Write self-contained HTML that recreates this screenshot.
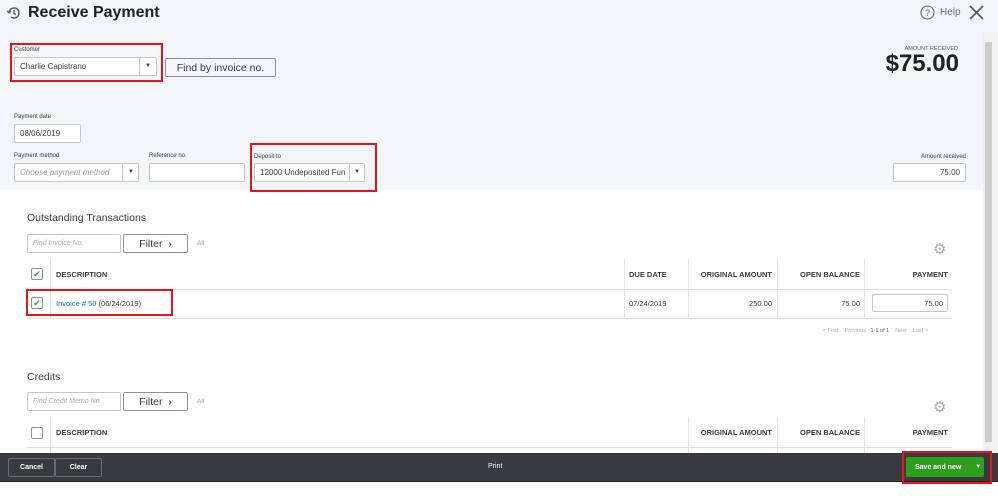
<!DOCTYPE html>
<html><head><meta charset="utf-8"><style>
*{box-sizing:border-box;margin:0;padding:0}
body{width:998px;height:502px;overflow:hidden;background:#fff;font-family:"Liberation Sans",sans-serif;color:#393a3d;position:relative}
.a{position:absolute}
.hdr{left:0;top:0;width:998px;height:190px;background:#f4f5f8}
.lbl{font-size:6px;color:#393a3d}
.inp{background:#fff;border:1px solid #c4c6c9;border-radius:2px;font-size:8px;padding-left:5px;display:flex;align-items:center}
.red{border:2px solid #e8141c}
.th{font-size:7.5px;font-weight:bold;color:#393a3d}
.vl{width:1px;background:#e3e5e8}
.hl{height:1px;background:#dcdfe3}
.btn{background:#fff;border:1px solid #8d9096;border-radius:2px;font-size:10.5px;display:flex;align-items:center;justify-content:center}
.fb{border:1px solid #6b6c72;border-radius:2px;color:#fff;font-size:7px;font-weight:bold;display:flex;align-items:center;justify-content:center}
.r{text-align:right}
.arr{font-size:6px;line-height:19px}
</style></head><body>
<div class="a hdr"></div>
<svg class="a" style="left:6px;top:5px" width="16" height="16" viewBox="0 0 16 16"><path d="M3 8a5 5 0 1 1 2 4" fill="none" stroke="#555" stroke-width="1.4"/><path d="M8 5v3.5l2 1" fill="none" stroke="#555" stroke-width="1.3"/><path d="M1 6l2 2 2-2" fill="none" stroke="#555" stroke-width="1.2"/></svg>
<div class="a" style="left:28px;top:4px;font-size:16px;font-weight:bold;color:#222">Receive Payment</div>
<svg class="a" style="left:920px;top:5px" width="15" height="15" viewBox="0 0 15 15"><circle cx="7.5" cy="7.5" r="6.5" fill="none" stroke="#666" stroke-width="1.1"/><text x="7.5" y="11" font-size="9" text-anchor="middle" fill="#666" font-family="Liberation Sans">?</text></svg>
<div class="a" style="left:940px;top:7px;font-size:10px;color:#6b6c72">Help</div>
<svg class="a" style="left:969px;top:5px" width="15" height="15" viewBox="0 0 15 15"><path d="M1 1L14 14M14 1L1 14" stroke="#555" stroke-width="1.6"/></svg>
<div class="a" style="left:983px;top:32px;width:15px;height:421px;background:#f0f0f0"></div>
<div class="a" style="left:985px;top:42px;width:7px;height:400px;background:#cdcdcd"></div>

<div class="a red" style="left:10px;top:43px;width:153px;height:39px"></div>
<div class="a lbl" style="left:14px;top:47px">Customer</div>
<div class="a inp" style="left:14px;top:57px;width:143px;height:19px">Charlie Capistrano</div>
<div class="a" style="left:139px;top:58px;width:1px;height:17px;background:#c4c6c9"></div>
<div class="a arr" style="left:145px;top:57px">▼</div>
<div class="a btn" style="left:165px;top:58px;width:111px;height:19px;background:#f4f5f8">Find by invoice no.</div>

<div class="a" style="left:870px;top:46px;width:88px;font-size:5.5px;color:#555;text-align:right">AMOUNT RECEIVED</div>
<div class="a" style="left:860px;top:50px;width:99px;font-size:24px;font-weight:bold;color:#222;text-align:right">$75.00</div>

<div class="a lbl" style="left:14px;top:114px">Payment date</div>
<div class="a inp" style="left:14px;top:124px;width:67px;height:19px">08/06/2019</div>
<div class="a lbl" style="left:14px;top:153px">Payment method</div>
<div class="a inp" style="left:14px;top:163px;width:125px;height:19px;color:#9a9a9a;font-style:italic">Choose payment method</div>
<div class="a" style="left:122px;top:164px;width:1px;height:17px;background:#c4c6c9"></div>
<div class="a arr" style="left:128px;top:163px">▼</div>
<div class="a lbl" style="left:149px;top:153px">Reference no.</div>
<div class="a inp" style="left:149px;top:163px;width:96px;height:19px"></div>
<div class="a red" style="left:250px;top:143px;width:127px;height:49px"></div>
<div class="a lbl" style="left:254px;top:154px">Deposit to</div>
<div class="a inp" style="left:254px;top:163px;width:111px;height:19px">12000 Undeposited Fun</div>
<div class="a" style="left:349px;top:164px;width:1px;height:17px;background:#c4c6c9"></div>
<div class="a arr" style="left:354px;top:163px">▼</div>
<div class="a lbl" style="left:900px;top:154px;width:66px;text-align:right">Amount received</div>
<div class="a inp" style="left:893px;top:163px;width:73px;height:19px;justify-content:flex-end;padding-right:5px">75.00</div>

<div class="a" style="left:27px;top:212px;font-size:10.5px;color:#393a3d">Outstanding Transactions</div>
<div class="a inp" style="left:27px;top:234px;width:94px;height:19px;font-size:7px;color:#aaa;font-style:italic">Find Invoice No.</div>
<div class="a btn" style="left:123px;top:234px;width:65px;height:19px">Filter&nbsp;&nbsp;<span style="color:#0077c5;font-weight:bold">›</span></div>
<div class="a" style="left:197px;top:240px;font-size:6.5px;color:#999">All</div>
<div class="a" style="left:933px;top:240px;font-size:15px;color:#aaa">⚙</div>

<div class="a vl" style="left:50px;top:259px;height:59px"></div>
<div class="a vl" style="left:624px;top:259px;height:59px"></div>
<div class="a vl" style="left:688px;top:259px;height:59px"></div>
<div class="a vl" style="left:777px;top:259px;height:59px"></div>
<div class="a vl" style="left:864px;top:259px;height:59px"></div>
<div class="a hl" style="left:27px;top:289px;width:925px"></div>
<div class="a hl" style="left:27px;top:318px;width:925px"></div>
<div class="a" style="left:31px;top:268px;width:12px;height:12px;border:1px solid #8d9096;border-radius:2px;color:#2ca01c;font-size:9px;line-height:10px;text-align:center">✔</div>
<div class="a th" style="left:56px;top:270px">DESCRIPTION</div>
<div class="a th" style="left:629px;top:270px">DUE DATE</div>
<div class="a th r" style="left:690px;top:270px;width:82px">ORIGINAL AMOUNT</div>
<div class="a th r" style="left:779px;top:270px;width:81px">OPEN BALANCE</div>
<div class="a th r" style="left:866px;top:270px;width:82px">PAYMENT</div>
<div class="a red" style="left:26px;top:289px;width:147px;height:27px"></div>
<div class="a" style="left:31px;top:297px;width:12px;height:12px;border:1px solid #8d9096;border-radius:2px;color:#2ca01c;font-size:9px;line-height:10px;text-align:center">✔</div>
<div class="a" style="left:56px;top:299px;font-size:7.5px"><span style="color:#0077c5">Invoice # 50</span> (06/24/2019)</div>
<div class="a" style="left:629px;top:299px;font-size:7.5px">07/24/2019</div>
<div class="a r" style="left:690px;top:299px;width:82px;font-size:7.5px">250.00</div>
<div class="a r" style="left:779px;top:299px;width:81px;font-size:7.5px">75.00</div>
<div class="a inp" style="left:872px;top:294px;width:76px;height:18px;justify-content:flex-end;padding-right:4px;font-size:7.5px">75.00</div>
<div class="a" style="left:823px;top:328px;font-size:5.5px;color:#aaa">&lt; First &nbsp;&nbsp; Previous &nbsp; <span style="color:#555">1-1 of 1</span> &nbsp;&nbsp; Next &nbsp;&nbsp; Last &gt;</div>

<div class="a" style="left:27px;top:371px;font-size:10.5px">Credits</div>
<div class="a inp" style="left:27px;top:392px;width:94px;height:19px;font-size:7px;color:#aaa;font-style:italic">Find Credit Memo No.</div>
<div class="a btn" style="left:123px;top:392px;width:65px;height:19px">Filter&nbsp;&nbsp;<span style="color:#0077c5;font-weight:bold">›</span></div>
<div class="a" style="left:197px;top:398px;font-size:6.5px;color:#999">All</div>
<div class="a" style="left:933px;top:398px;font-size:15px;color:#aaa">⚙</div>
<div class="a vl" style="left:50px;top:417px;height:36px"></div>
<div class="a vl" style="left:688px;top:417px;height:36px"></div>
<div class="a vl" style="left:777px;top:417px;height:36px"></div>
<div class="a vl" style="left:864px;top:417px;height:36px"></div>
<div class="a hl" style="left:27px;top:447px;width:925px"></div>
<div class="a" style="left:31px;top:427px;width:12px;height:12px;border:1px solid #8d9096;border-radius:2px;background:#fff"></div>
<div class="a th" style="left:56px;top:428px">DESCRIPTION</div>
<div class="a th r" style="left:690px;top:428px;width:82px">ORIGINAL AMOUNT</div>
<div class="a th r" style="left:779px;top:428px;width:81px">OPEN BALANCE</div>
<div class="a th r" style="left:866px;top:428px;width:82px">PAYMENT</div>

<div class="a" style="left:0;top:453px;width:998px;height:29px;background:#393a3d;border-bottom:1px solid #222"></div>
<div class="a fb" style="left:8px;top:458px;width:47px;height:19px">Cancel</div>
<div class="a fb" style="left:55px;top:458px;width:47px;height:19px">Clear</div>
<div class="a" style="left:488px;top:463px;font-size:7px;color:#fff">Print</div>
<div class="a red" style="left:902px;top:451px;width:90px;height:33px"></div>
<div class="a" style="left:906px;top:457px;width:78px;height:20px;background:#2ca01c;border-radius:2px;color:#fff;font-size:7px;font-weight:bold;display:flex;align-items:center;padding-left:9px">Save and new<span style="margin-left:14px;font-size:6px">▼</span></div>
</body></html>
